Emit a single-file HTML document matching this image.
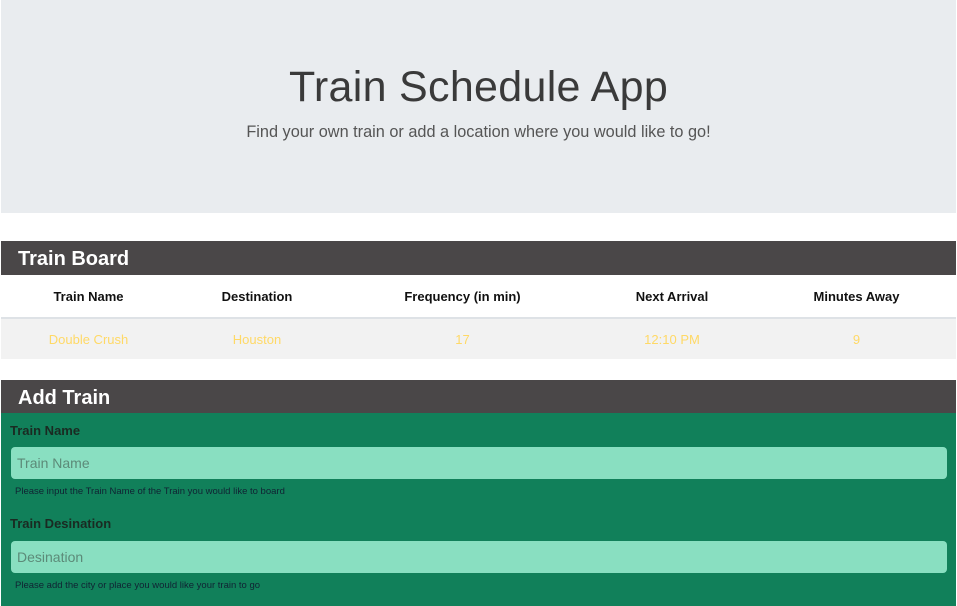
<!DOCTYPE html>
<html><head><style>
body{margin:0;background:#fff;font-family:"Liberation Sans",sans-serif;width:957px;height:606px;overflow:hidden;position:relative}
.jumbo{position:absolute;left:1px;top:0;width:955px;height:213px;background:#e9ecef;text-align:center}
.jumbo h1{margin:0;position:absolute;top:63px;width:100%;font-weight:300;font-size:43px;color:#3a3a3a;letter-spacing:0.3px}
.jumbo p{margin:0;position:absolute;top:123px;width:100%;font-size:16.3px;font-weight:300;color:#555}
.hdr{position:absolute;left:1px;width:955px;height:34px;background:#4a4748;color:#fff;font-size:20px;font-weight:bold;line-height:36px;padding-left:17px;box-sizing:border-box}
table{position:absolute;left:1px;top:275px;width:955px;border-collapse:collapse;font-size:13px}
th{height:42px;font-weight:bold;color:#111;border-bottom:2px solid #dee2e6;padding:0}
td{height:40px;background:#f2f2f2;color:#ffd966;text-align:center;padding:0}
.form{position:absolute;left:1px;top:413px;width:955px;height:193px;background:#11805a}
.lab{position:absolute;left:9px;font-size:13px;font-weight:bold;color:#1a2a22}
.inp{position:absolute;left:10px;width:936px;height:32px;background:#89dfc1;border-radius:4px;font-size:14px;color:#5c8a78;line-height:32px;padding-left:6px;box-sizing:border-box}
.help{position:absolute;left:14px;font-size:9.5px;color:#123}
</style></head><body>
<div class="jumbo"><h1>Train Schedule App</h1><p>Find your own train or add a location where you would like to go!</p></div>
<div class="hdr" style="top:241px">Train Board</div>
<table><tr><th style="width:175px">Train Name</th><th style="width:162px">Destination</th><th style="width:249px">Frequency (in min)</th><th style="width:170px">Next Arrival</th><th>Minutes Away</th></tr>
<tr><td>Double Crush</td><td>Houston</td><td>17</td><td>12:10 PM</td><td>9</td></tr></table>
<div class="hdr" style="top:380px">Add Train</div>
<div class="form">
<div class="lab" style="top:10px">Train Name</div>
<div class="inp" style="top:34px">Train Name</div>
<div class="help" style="top:73px">Please input the Train Name of the Train you would like to board</div>
<div class="lab" style="top:103px">Train Desination</div>
<div class="inp" style="top:128px">Desination</div>
<div class="help" style="top:167px">Please add the city or place you would like your train to go</div>
</div>
</body></html>
